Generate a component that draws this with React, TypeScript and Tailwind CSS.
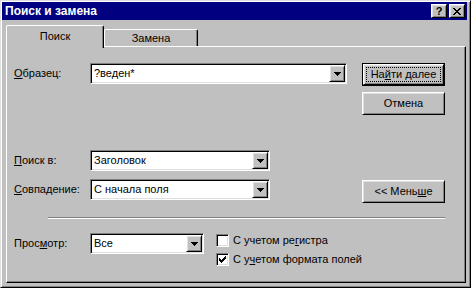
import React from "react";

// classic 3D edges
const raised =
  "border border-t-white border-l-white border-r-black border-b-black shadow-[inset_1px_1px_0_#dfdfdf,inset_-1px_-1px_0_#808080]";
const sunken =
  "border border-t-[#808080] border-l-[#808080] border-r-white border-b-white shadow-[inset_1px_1px_0_#000,inset_-1px_-1px_0_#dfdfdf]";

const Arrow = () => (
  <svg width="7" height="4" viewBox="0 0 7 4" shapeRendering="crispEdges">
    <rect x="0" y="0" width="7" height="1" fill="#000" />
    <rect x="1" y="1" width="5" height="1" fill="#000" />
    <rect x="2" y="2" width="3" height="1" fill="#000" />
    <rect x="3" y="3" width="1" height="1" fill="#000" />
  </svg>
);

const Check = () => (
  <svg width="7" height="7" viewBox="0 0 7 7" shapeRendering="crispEdges">
    <rect x="6" y="0" width="1" height="1" fill="#000" />
    <rect x="5" y="1" width="2" height="1" fill="#000" />
    <rect x="0" y="2" width="1" height="1" fill="#000" />
    <rect x="4" y="2" width="3" height="1" fill="#000" />
    <rect x="0" y="3" width="2" height="1" fill="#000" />
    <rect x="3" y="3" width="3" height="1" fill="#000" />
    <rect x="0" y="4" width="5" height="1" fill="#000" />
    <rect x="1" y="5" width="3" height="1" fill="#000" />
    <rect x="2" y="6" width="1" height="1" fill="#000" />
  </svg>
);

const CloseX = () => (
  <svg width="8" height="7" viewBox="0 0 8 7" shapeRendering="crispEdges">
    <rect x="0" y="0" width="2" height="1" fill="#000" />
    <rect x="6" y="0" width="2" height="1" fill="#000" />
    <rect x="1" y="1" width="2" height="1" fill="#000" />
    <rect x="5" y="1" width="2" height="1" fill="#000" />
    <rect x="2" y="2" width="4" height="1" fill="#000" />
    <rect x="3" y="3" width="2" height="1" fill="#000" />
    <rect x="2" y="4" width="4" height="1" fill="#000" />
    <rect x="1" y="5" width="2" height="1" fill="#000" />
    <rect x="5" y="5" width="2" height="1" fill="#000" />
    <rect x="0" y="6" width="2" height="1" fill="#000" />
    <rect x="6" y="6" width="2" height="1" fill="#000" />
  </svg>
);

const Combo = ({ value, className }: { value: string; className: string }) => (
  <div className={`${sunken} ${className} h-[21px] bg-white p-[1px] flex items-stretch`}>
    <div className="flex-1 flex items-center pl-[2px] leading-none">{value}</div>
    <div className={`${raised} w-[16px] bg-[#c0c0c0] flex items-center justify-center`}>
      <Arrow />
    </div>
  </div>
);

const Button = ({ children }: { children: React.ReactNode }) => (
  <div className={`${raised} w-[83px] h-[23px] flex items-center justify-center leading-none`}>
    {children}
  </div>
);

const Checkbox = ({ checked, children }: { checked?: boolean; children: React.ReactNode }) => (
  <div className="flex items-center gap-[4px] h-[13px]">
    <div className={`${sunken} w-[13px] h-[13px] bg-white flex items-center justify-center`}>
      {checked && <Check />}
    </div>
    <span className="leading-none">{children}</span>
  </div>
);

const Label = ({ children }: { children: React.ReactNode }) => (
  <div className="w-[76px] leading-none">{children}</div>
);

export default function App() {
  return (
    <div className="w-[471px] h-[288px] bg-[#c0c0c0] border border-t-[#dfdfdf] border-l-[#dfdfdf] border-r-black border-b-black shadow-[inset_1px_1px_0_#fff,inset_-1px_-1px_0_#808080] pt-[1px] pl-[1px] pr-[3px] overflow-hidden font-['Liberation_Sans',Arial,sans-serif] text-[11px] text-black">
      {/* title bar */}
      <div className="h-[18px] bg-[#000080] flex items-center pl-[3px] pr-[2px]">
        <span className="text-white font-bold text-[12px] leading-none flex-1">Поиск и замена</span>
        <div className={`${raised} w-[16px] h-[14px] bg-[#c0c0c0] text-black flex items-center justify-center font-bold text-[11px] leading-none`}>
          ?
        </div>
        <div className={`${raised} w-[16px] h-[14px] ml-[2px] bg-[#c0c0c0] flex items-center justify-center`}>
          <CloseX />
        </div>
      </div>

      <div className="pl-[4px] pt-[5px]">
        {/* tabs */}
        <div className="flex items-end h-[21px]">
          <div className="relative z-10 -mb-[2px] w-[98px] h-[23px] pb-[2px] bg-[#c0c0c0] border-t border-l border-r border-t-white border-l-white border-r-black shadow-[inset_-1px_0_0_#808080] rounded-t-[2px] flex items-center justify-center leading-none">
            Поиск
          </div>
          <div className="w-[94px] h-[17px] border-t border-l border-r border-t-white border-l-white border-r-black shadow-[inset_-1px_0_0_#808080] rounded-t-[2px] flex items-center justify-center leading-none">
            Замена
          </div>
        </div>

        {/* panel */}
        <div className="w-[460px] h-[237px] border border-t-white border-l-white border-r-black border-b-black shadow-[inset_-1px_-1px_0_#808080] pl-[7px] pt-[16px]">
          <div className="flex">
            <div className="w-[348px] flex flex-col">
              <div className="flex items-center">
                <Label>
                  <u>О</u>бразец:
                </Label>
                <Combo value="?веден*" className="w-[257px]" />
              </div>
              <div className="flex items-center mt-[66px]">
                <Label>
                  <u>П</u>оиск в:
                </Label>
                <Combo value="Заголовок" className="w-[180px]" />
              </div>
              <div className="flex items-center mt-[8px]">
                <Label>
                  <u>С</u>овпадение:
                </Label>
                <Combo value="С начала поля" className="w-[180px]" />
              </div>
            </div>
            <div className="flex flex-col">
              <div className="border border-black w-[83px] h-[23px]">
                <div className={`${raised} h-full p-[2px]`}>
                  <div className="h-full border border-dotted border-black flex items-center justify-center leading-none">
                    <span>
                      На<u>й</u>ти далее
                    </span>
                  </div>
                </div>
              </div>
              <div className="mt-[6px]">
                <Button>Отмена</Button>
              </div>
              <div className="mt-[65px]">
                <Button>
                  <span>
                    &lt;&lt; Мень<u>ш</u>е
                  </span>
                </Button>
              </div>
            </div>
          </div>

          <div className="ml-[34px] mt-[14px] w-[397px] h-[2px] border-t border-t-[#808080] border-b border-b-white" />

          <div className="flex mt-[14px]">
            <div className="flex items-center h-[21px]">
              <Label>
                Прос<u>м</u>отр:
              </Label>
              <Combo value="Все" className="w-[114px]" />
            </div>
            <div className="ml-[12px] pt-[1px] flex flex-col gap-[6px]">
              <Checkbox>
                С учетом ре<u>г</u>истра
              </Checkbox>
              <Checkbox checked>
                С у<u>ч</u>етом формата полей
              </Checkbox>
            </div>
          </div>
        </div>
      </div>
    </div>
  );
}
